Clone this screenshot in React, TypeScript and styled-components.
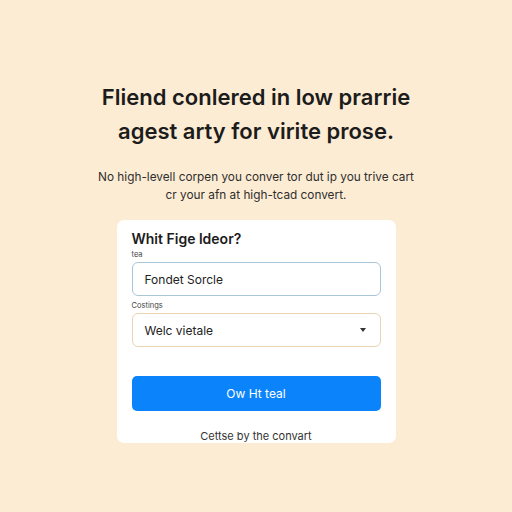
import * as React from 'react';
import styled, { createGlobalStyle } from 'styled-components';

const GlobalStyle = createGlobalStyle`
  html, body {
    margin: 0;
    padding: 0;
    background: #fdecd4;
  }
  body {
    font-family: "Inter", "Liberation Sans", Arial, sans-serif;
    color: #1f1f1f;
  }
`;

const Page = styled.div`
  width: 512px;
  height: 512px;
  display: flex;
  flex-direction: column;
  align-items: center;
  padding-top: 80px;
  box-sizing: border-box;
  background: #fdecd4;
`;

const Headline = styled.h1`
  margin: 0;
  font-size: 22px;
  font-weight: 600;
  line-height: 34px;
  text-align: center;
  color: #1c1c1c;
`;

const Lead = styled.p`
  margin: 20px 0 0;
  font-size: 11.8px;
  line-height: 18px;
  text-align: center;
  color: #2e2e2e;
`;

const Card = styled.form`
  margin-top: 16px;
  width: 279px;
  background: #ffffff;
  border-radius: 7px;
  padding: 10px 15px 0;
  box-sizing: border-box;
  height: 223px;
  display: flex;
  flex-direction: column;
`;

const CardTitle = styled.h2`
  margin: 0;
  font-size: 14px;
  font-weight: 600;
  line-height: 18px;
  color: #1c1c1c;
`;

const Label = styled.label<{ gap?: number }>`
  display: block;
  font-size: 7.5px;
  line-height: 9px;
  color: #444;
  margin-top: ${p => p.gap ?? 0}px;
  margin-bottom: 3px;
`;

const Field = styled.div<{ tone: 'blue' | 'tan' }>`
  height: 34px;
  flex-shrink: 0;
  border-radius: 6px;
  border: 1px solid ${p => (p.tone === 'blue' ? '#a8c6d6' : '#ead4b2')};
  box-sizing: border-box;
  display: flex;
  align-items: center;
  justify-content: space-between;
  padding: 0 12px;
  font-size: 12px;
  color: #222;
`;

const Chevron = styled.span`
  width: 0;
  height: 0;
  border-left: 3.5px solid transparent;
  border-right: 3.5px solid transparent;
  border-top: 4px solid #333;
  margin-right: 2px;
`;

const Submit = styled.button`
  margin-top: 29px;
  height: 35px;
  flex-shrink: 0;
  border: none;
  border-radius: 5px;
  background: #0b84fb;
  color: #ffffff;
  font-family: inherit;
  font-size: 12px;
  cursor: pointer;
`;

const Footnote = styled.p`
  margin: 18px 0 0;
  font-size: 11px;
  text-align: center;
  color: #333;
`;

export default function App() {
  return (
    <>
      <GlobalStyle />
      <Page>
        <Headline>
          Fliend conlered in low prarrie
          <br />
          agest arty for virite prose.
        </Headline>
        <Lead>
          No high-levell corpen you conver tor dut ip you trive cart
          <br />
          cr your afn at high-tcad convert.
        </Lead>
        <Card onSubmit={e => e.preventDefault()}>
          <CardTitle>Whit Fige ldeor?</CardTitle>
          <Label gap={2}>tea</Label>
          <Field tone="blue">Fondet Sorcle</Field>
          <Label gap={5}>Costings</Label>
          <Field tone="tan">
            Welc vietale
            <Chevron />
          </Field>
          <Submit type="submit">Ow Ht teal</Submit>
          <Footnote>Cettse by the convart</Footnote>
        </Card>
      </Page>
    </>
  );
}
